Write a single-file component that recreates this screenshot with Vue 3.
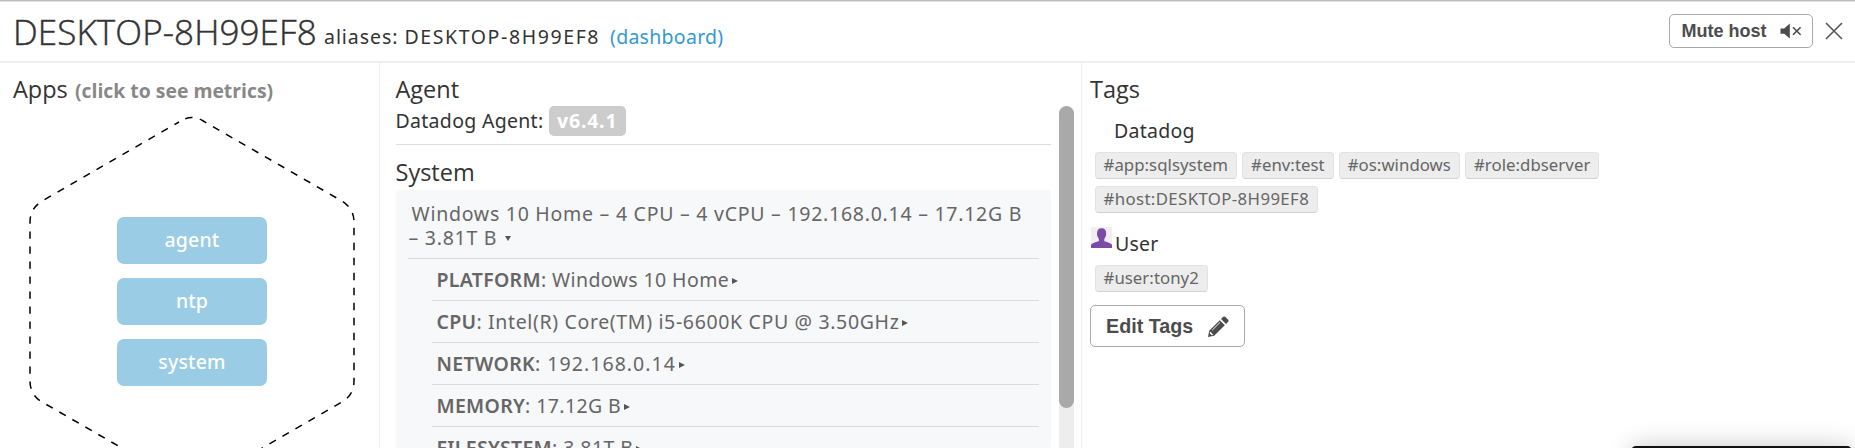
<script setup>
const apps = ['agent', 'ntp', 'system']
const rows = [
  { k: 'PLATFORM', v: 'Windows 10 Home', c: 'platform' },
  { k: 'CPU', v: 'Intel(R) Core(TM) i5-6600K CPU @ 3.50GHz', c: 'cpu' },
  { k: 'NETWORK', v: '192.168.0.14', c: 'network' },
  { k: 'MEMORY', v: '17.12G B', c: 'memory' },
  { k: 'FILESYSTEM', v: '3.81T B', c: 'filesystem' },
]
const hostTags = ['#app:sqlsystem', '#env:test', '#os:windows', '#role:dbserver', '#host:DESKTOP-8H99EF8']
</script>

<template>
  <div class="page">
    <header class="head">
      <h1>DESKTOP-8H99EF8</h1>
      <span class="alias">aliases: <span class="name">DESKTOP-8H99EF8</span></span>
      <a class="dash">(dashboard)</a>
      <button class="mute">
        <span>Mute host</span>
        <svg width="22" height="16" viewBox="0 0 22 16">
          <path d="M0.5 5.4H4.2L9.8 0.6V15.4L4.2 10.8H0.5Z" fill="#4c4c4c" />
          <path d="M13 4.2L20.6 11.8M20.6 4.2L13 11.8" stroke="#4c4c4c" stroke-width="1.6" />
        </svg>
      </button>
      <svg class="close" width="18" height="18" viewBox="0 0 18 18">
        <path d="M1 1L17 17M17 1L1 17" stroke="#555" stroke-width="1.6" />
      </svg>
    </header>
    <main class="cols">
      <section class="apps">
        <h2>Apps <small>(click to see metrics)</small></h2>
        <div class="hexbox">
          <svg class="hex" width="379" height="400" viewBox="0 100 379 400">
            <path
              d="M179 122L181.6 120.5Q192 114.5 202.4 120.5L341 200.5Q354 208 354 222V381Q354 395 342 402L204 481.6Q192 488.5 180 481.6L42 402Q30 395 30 381V222Q30 208 43 200.5Z"
              fill="none" stroke="#000" stroke-width="1.5" stroke-dasharray="7.4 7.6" stroke-dashoffset="-7" />
          </svg>
          <div class="stack">
            <div v-for="a in apps" :key="a" class="app">{{ a }}</div>
          </div>
        </div>
      </section>
      <section class="info">
        <h2 class="agent">Agent</h2>
        <div class="ver"><span class="ag">Datadog Agent:</span><b>v6.4.1</b></div>
        <h2 class="sys">System</h2>
        <div class="box">
          <div class="sum">
            <div class="l1">Windows 10 Home – 4 CPU – 4 vCPU – 192.168.0.14 – 17.12G B</div>
            <div class="l2">– 3.81T B<i class="down"></i></div>
          </div>
          <div class="rows">
            <div v-for="r in rows" :key="r.k" class="row" :class="r.c"><b>{{ r.k }}</b><span>: {{ r.v }}</span><i class="right"></i></div>
          </div>
        </div>
        <div class="track"><div class="thumb"></div></div>
      </section>
      <section class="tags">
        <h2>Tags</h2>
        <h3 class="dd">Datadog</h3>
        <div class="list">
          <span v-for="t in hostTags" :key="t" class="tag" :class="{ host: t.startsWith('#host') }">{{ t }}</span>
        </div>
        <h3 class="user">
          <svg width="21" height="21" viewBox="0 0 21 21">
            <rect width="21" height="21" fill="#efeff1" />
            <path d="M0 21V17.8Q1.5 16 7.8 14.3Q8.4 12.6 7.3 11Q6 9.5 6 7Q5.8 1.3 10.6 1.3Q15.4 1.3 15.2 7Q15.2 9.5 13.8 11Q12.8 12.6 13.4 14.3Q19.5 16 21 17.8V21Z" fill="#7b4ba6" />
          </svg>
          <span>User</span>
        </h3>
        <div class="list"><span class="tag">#user:tony2</span></div>
        <button class="edit">
          <span>Edit Tags</span>
          <svg width="21" height="21" viewBox="0 0 21 21">
            <path d="M0 21L1.2 14.8L11.8 4.2L16.8 9.2L6.2 19.8Z" fill="#4c4c4c" />
            <path d="M13 3L15.2 0.8Q16.2 0 17.2 0.8L20.2 3.8Q21 4.8 20.2 5.8L18 8Z" fill="#4c4c4c" />
            <path d="M4.2 14.2L12 6.4" stroke="#fff" stroke-width="0.9" />
            <path d="M1.6 17L2.2 15.6L5.3 18.7L3.8 19.3Z" fill="#fff" />
          </svg>
        </button>
      </section>
    </main>
    <div class="toast"></div>
  </div>
</template>

<style>
body { margin: 0; background: #fff; }
</style>

<style scoped>
.page { position: relative; box-sizing: border-box; width: 1855px; height: 448px; overflow: hidden; background: #fff; color: #333; border-top: 1px solid #bcbcbc; box-shadow: inset 0 1px #e2e2e2; font-family: "Noto Sans", "Open Sans", sans-serif; font-size: 19.5px; white-space: nowrap; }
h1, h2, h3 { margin: 0; font-weight: 400; }
.head { box-sizing: border-box; height: 62px; border-bottom: 2px solid #eee; display: flex; padding-left: 13px; }
h1 { font-family: "Open Sans", sans-serif; font-weight: 300; font-size: 35px; line-height: 62px; width: 311px; letter-spacing: 0.1px; -webkit-text-stroke: 0.45px #333; }
.alias { line-height: 71px; width: 286px; letter-spacing: 0.95px; }
.name { letter-spacing: 1.6px; }
.dash { line-height: 71px; color: #3399cf; letter-spacing: 0.28px; }
button { box-sizing: border-box; font-family: "Liberation Sans", sans-serif; font-weight: 700; color: #4c4c4c; background: #fff; border: 1.5px solid #aaa; border-radius: 5px; display: flex; align-items: center; justify-content: space-between; }
.mute { margin: 13px 12px 0 auto; width: 144px; height: 34px; font-size: 18px; padding: 0 10px 0 12px; }
.close { margin: 21px 12.5px 0 0; }
.cols { display: flex; height: 386px; }
h2 { font-family: "Open Sans", sans-serif; font-size: 23.5px; line-height: 52px; height: 52px; }
.apps { width: 379px; border-right: 1.5px solid #eee; }
.apps h2 { padding-left: 13px; }
small { font-size: 19.4px; font-weight: 700; color: #888; margin-left: 1px; }
.hexbox { position: relative; padding-top: 102px; }
.hex { position: absolute; left: 0; top: -15px; }
.stack { position: relative; display: flex; flex-direction: column; gap: 14px; padding-left: 117px; }
.app { width: 150px; height: 47px; border-radius: 7px; background: #9acce5; color: #fff; text-align: center; line-height: 46px; letter-spacing: 0.15px; font-weight: 500; }
.info { position: relative; width: 702px; box-sizing: border-box; border-right: 1.5px solid #eee; padding-left: 15.5px; }
.info h2 { height: 43px; }
.ver { box-sizing: border-box; height: 38.5px; width: 655.5px; border-bottom: 1.5px solid #ddd; display: flex; line-height: 30px; }
.ag { width: 153.5px; letter-spacing: 0.3px; }
.ver b { box-sizing: border-box; width: 77px; height: 30px; line-height: 29px; background: #ccc; color: #fff; border-radius: 5px; padding-left: 8px; letter-spacing: 0.8px; }
.info .sys { line-height: 55px; height: 45.5px; }
.box { box-sizing: border-box; width: 655.5px; height: 260px; background: #f7f8fa; border-radius: 4px; padding: 10px 12px 0 12px; color: #666; }
.sum { box-sizing: border-box; height: 58.5px; border-bottom: 1px solid #d9dbde; padding-top: 2px; line-height: 24px; }
.l1 { padding-left: 4px; letter-spacing: 0.74px; }
.l2 { padding-left: 1px; letter-spacing: 0.74px; }
.rows { margin-left: 24px; }
.row { box-sizing: border-box; height: 42px; line-height: 41px; border-bottom: 1px solid #d9dbde; padding-left: 5px; letter-spacing: 0.4px; }
.row b { font-weight: 600; letter-spacing: 0.3px; }
.cpu { letter-spacing: 0.65px; }
.network { letter-spacing: 1.05px; }
.down { display: inline-block; border: 3.5px solid transparent; border-top: 5.5px solid #555; border-bottom: 0; margin-left: 8px; vertical-align: 4px; }
.right { display: inline-block; border: 3.5px solid transparent; border-left: 6px solid #555; border-right: 0; margin-left: 3px; vertical-align: 3px; }
.track { position: absolute; left: 678.5px; top: 50px; width: 15.5px; height: 345px; background: linear-gradient(#fff 20px, #ededed 20px); }
.thumb { position: relative; margin-top: -7px; height: 302px; border-radius: 8px; background: #a9a9a9; }
.tags { padding-left: 8px; }
.tags h2 { height: 49px; }
h3 { font-size: 19.5px; letter-spacing: 0.25px; }
.dd { padding-left: 24px; line-height: 38px; height: 40px; }
.list { display: flex; flex-wrap: wrap; width: 520px; gap: 7px 5px; padding-left: 4.5px; }
.tag { box-sizing: border-box; height: 27px; line-height: 24px; padding: 0 8px; border: 1px solid #e2e2e2; border-bottom: 1.5px solid #d2d2d2; border-radius: 4px; background: #ededed; color: #666; font-size: 16.8px; letter-spacing: 0.04px; }
.host { letter-spacing: 0.38px; }
.user { display: flex; height: 52px; line-height: 61px; }
.user svg { margin: 14px 3px 0 1px; }
.edit { margin-top: 13px; width: 155px; height: 42px; font-size: 19.7px; padding: 0 15px 0 15px; }
.toast { position: absolute; left: 1631px; top: 445px; width: 221px; height: 40px; border-radius: 5px; background: #111; box-shadow: 0 0 24px rgba(0,0,0,.22); }
</style>
